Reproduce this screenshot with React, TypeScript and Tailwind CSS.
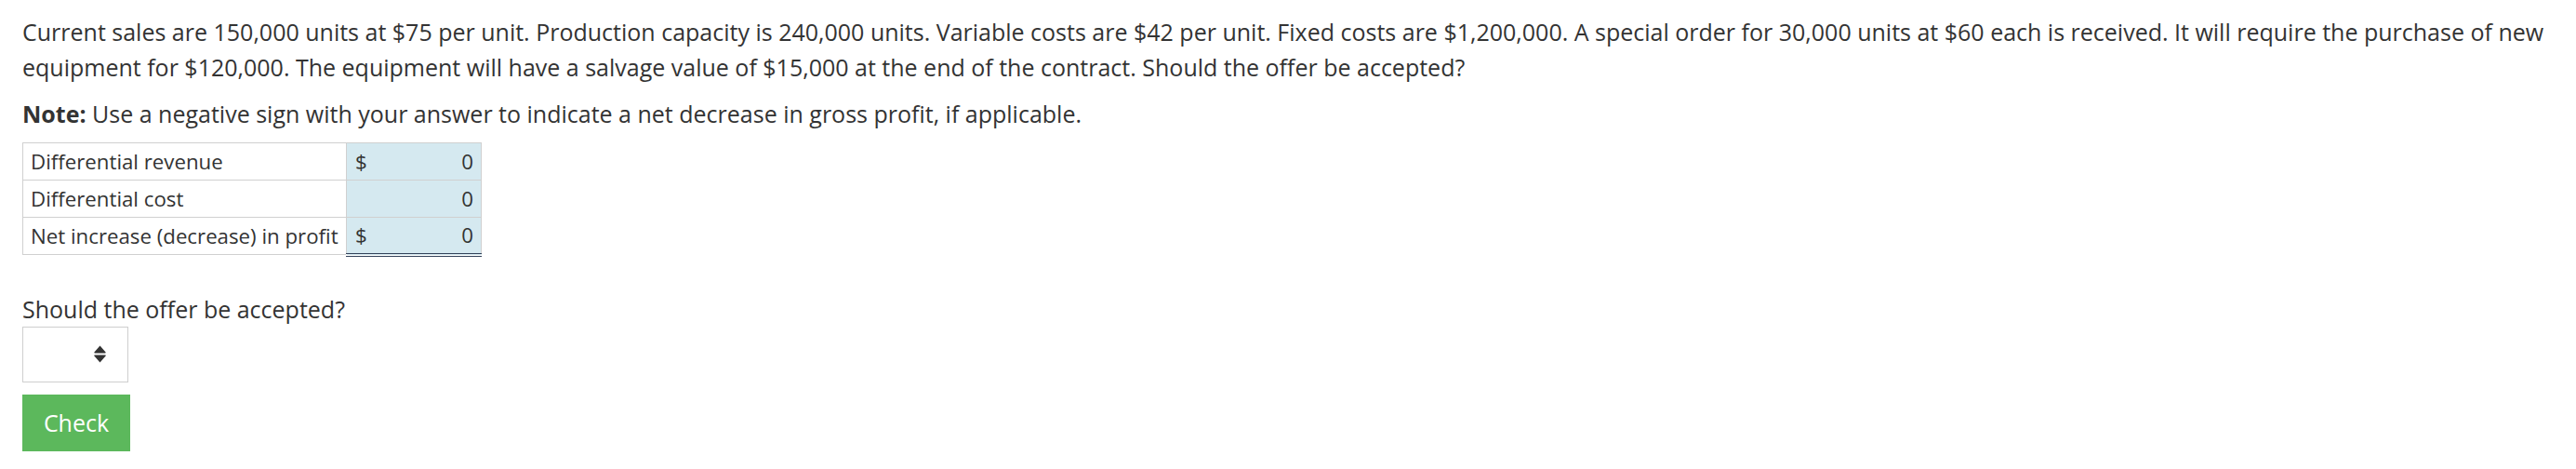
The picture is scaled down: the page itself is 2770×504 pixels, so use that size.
// Special order decision question: prompt, differential table, answer select and check button

const rows = [
  { label: 'Differential revenue', dollar: true, value: '0' },
  { label: 'Differential cost', dollar: false, value: '0' },
  { label: 'Net increase (decrease) in profit', dollar: true, value: '0' },
]

function SortIcon() {
  return (
    <svg width="13" height="19" viewBox="0 0 13 19" className="block">
      <path d="M6.5 0.5 L12.6 7.6 Q13 8.4 12.1 8.4 L0.9 8.4 Q0 8.4 0.4 7.6 Z" fill="#333" />
      <path d="M6.5 18.5 L12.6 11.4 Q13 10.6 12.1 10.6 L0.9 10.6 Q0 10.6 0.4 11.4 Z" fill="#333" />
    </svg>
  )
}

export default function App() {
  return (
    <div className="min-h-[504px] bg-white pt-[15px] pr-[12px] pl-[24px] font-['Open_Sans',sans-serif] text-[25px] leading-[38px] text-[#333]">
      <p className="mb-[12px]">
        Current sales are 150,000 units at $75 per unit. Production capacity is 240,000 units. Variable costs are $42 per unit.
        Fixed costs are $1,200,000. A special order for 30,000 units at $60 each is received. It will require the purchase of new
        equipment for $120,000. The equipment will have a salvage value of $15,000 at the end of the contract. Should the offer be
        accepted?
      </p>
      <p className="mb-[12px]">
        <strong className="font-bold">Note:</strong> Use a negative sign with your answer to indicate a net decrease in gross
        profit, if applicable.
      </p>

      <table className="border-collapse text-[22.25px] leading-[30px]">
        <tbody>
          {rows.map((row, i) => {
            const isTotal = i === rows.length - 1
            const isBeforeTotal = i === rows.length - 2
            return (
              <tr key={row.label} className="h-[40px]">
                <td className="w-[348px] border border-[#d0d0d0] py-0 pr-[6px] pl-[8px] whitespace-nowrap">{row.label}</td>
                <td
                  className={
                    'w-[145px] border border-[#d0d0d0] bg-[#d5e9f0] py-0 pr-[8px] pl-[9px] ' +
                    (isBeforeTotal ? 'border-b-black ' : '') +
                    (isTotal ? 'border-b-[4px] border-b-[#34435a] border-double' : '')
                  }
                >
                  <div className="flex items-center justify-between">
                    <span>{row.dollar ? '$' : ''}</span>
                    <span>{row.value}</span>
                  </div>
                </td>
              </tr>
            )
          })}
        </tbody>
      </table>

      <p className="mt-[37px]">Should the offer be accepted?</p>
      <div className="flex h-[60px] w-[114px] items-center justify-end border border-[#cfcfcf] bg-white pr-[23px]">
        <SortIcon />
      </div>
      <button
        type="button"
        className="mt-[13px] flex h-[61px] w-[116px] items-center justify-center bg-[#5cb85c] text-[25px] text-white"
      >
        Check
      </button>
    </div>
  )
}
